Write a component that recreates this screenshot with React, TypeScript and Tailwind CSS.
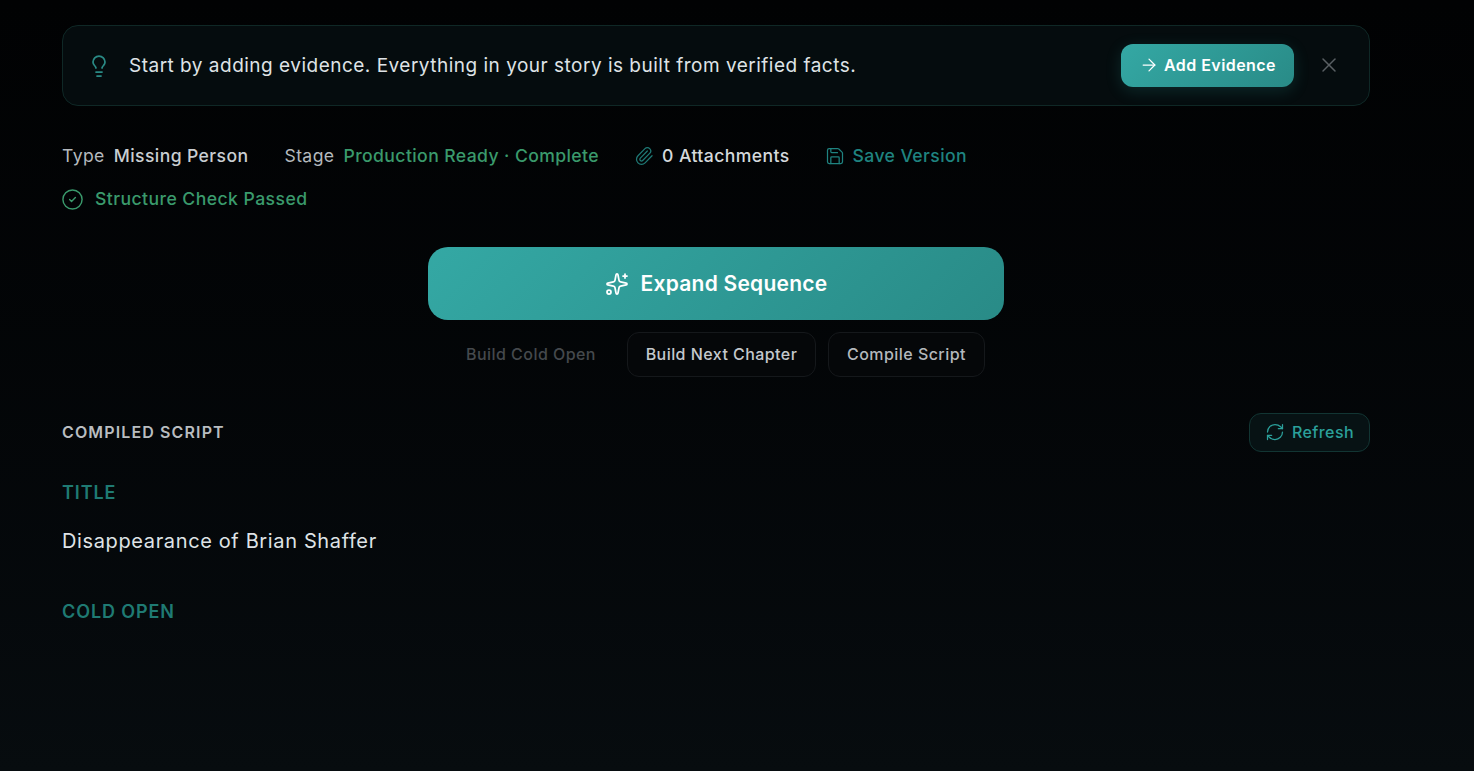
import { ArrowRight, CircleCheck, Lightbulb, Paperclip, RefreshCw, Save, Sparkles, X } from "lucide-react";

function Banner() {
	return (
		<div className="flex h-[81px] items-center rounded-2xl border border-[#0f2826] bg-[#050c0e] pl-[24px] pr-[28px]">
			<Lightbulb className="h-6 w-6 text-[#2a8a85]" strokeWidth={1.75} />
			<p className="ml-[18px] text-[19px] leading-7 tracking-[0.49px] text-[#dfe3e6]">
				Start by adding evidence. Everything in your story is built from verified facts.
			</p>
			<button className="ml-auto flex h-[43px] w-[173px] items-center justify-center gap-[5px] rounded-xl bg-[linear-gradient(135deg,#34a8a4,#298b87)] pb-[1px] text-[16px] font-semibold tracking-[0.45px] text-white shadow-[0_4px_16px_rgba(45,160,155,0.2)]">
				<ArrowRight className="h-5 w-5" strokeWidth={1.5} />
				Add Evidence
			</button>
			<X className="ml-[23px] h-6 w-6 -translate-y-[1px] text-[#5a6064]" strokeWidth={1.5} />
		</div>
	);
}

function MetaRow() {
	return (
		<div className="mt-[38px] flex items-center text-[17.6px] leading-6 tracking-[0.4px]">
			<span className="text-[#b4b9bd]">Type</span>
			<span className="ml-[9px] font-medium text-[#c9ced2]">Missing Person</span>
			<span className="ml-[36px] text-[#b4b9bd]">Stage</span>
			<span className="ml-[9px] font-medium text-[#3a9a6c]">Production Ready · Complete</span>
			<Paperclip className="ml-[35px] h-5 w-5 text-[#1f7a76]" strokeWidth={1.5} />
			<span className="ml-[8px] font-medium text-[#d5d9dc]">0 Attachments</span>
			<Save className="ml-[35px] h-5 w-5 text-[#1f8380]" strokeWidth={1.5} />
			<span className="ml-[8px] font-medium text-[#1f8380]">Save Version</span>
		</div>
	);
}

export default function App() {
	return (
		<div className="h-[771px] overflow-hidden bg-gradient-to-b from-[#010203] to-[#070c0f] font-['Inter',sans-serif]">
			<div className="ml-[62px] w-[1308px] pt-[25px]">
				<Banner />
				<MetaRow />

				<div className="mt-[19px] flex items-center gap-[11px] text-[17.6px] font-medium leading-6 tracking-[0.44px] text-[#3a9a6c]">
					<CircleCheck className="-ml-[1px] h-[23px] w-[23px]" strokeWidth={1.5} />
					Structure Check Passed
				</div>

				<div className="mt-[36px] flex flex-col items-center">
					<button className="flex h-[73px] w-[576px] items-center justify-center gap-[12px] rounded-[20px] bg-[linear-gradient(135deg,#34a8a4,#298b87)] text-[21px] font-semibold tracking-[0.25px] text-white">
						<Sparkles className="h-6 w-6" strokeWidth={1.75} />
						Expand Sequence
					</button>
					<div className="mt-[12px] flex items-center gap-[12px] text-[16px] font-medium tracking-[0.45px]">
						<span className="flex h-[45px] w-[168px] items-center justify-center pb-[2px] text-[#45494d]">Build Cold Open</span>
						<button className="h-[45px] w-[189px] rounded-xl border border-[#15181b] bg-[#050709] pb-[2px] text-[#c4c9cd]">
							Build Next Chapter
						</button>
						<button className="h-[45px] w-[157px] rounded-xl border border-[#15181b] bg-[#050709] pb-[2px] text-[#b4b9bd]">
							Compile Script
						</button>
					</div>
				</div>

				<div className="mt-[36px] flex items-center justify-between">
					<h2 className="pb-[2px] text-[16px] font-semibold tracking-[1.13px] text-[#b9bdc0]">COMPILED SCRIPT</h2>
					<button className="flex h-[39px] w-[121px] items-center justify-center gap-[7px] rounded-xl border border-[#123533] bg-[#071214] pb-[1px] text-[16px] font-medium tracking-[0.4px] text-[#2ba09b]">
						<RefreshCw className="h-5 w-5" strokeWidth={1.5} />
						Refresh
					</button>
				</div>

				<h3 className="mt-[29px] text-[18px] font-semibold leading-6 tracking-[0.05em] text-[#1f7a73]">TITLE</h3>
				<p className="mt-[22px] text-[20px] leading-7 tracking-[0.63px] text-[#dfe3e6]">Disappearance of Brian Shaffer</p>
				<h3 className="mt-[45px] text-[18px] font-semibold leading-6 tracking-[0.05em] text-[#1f7a73]">COLD OPEN</h3>
			</div>
		</div>
	);
}
